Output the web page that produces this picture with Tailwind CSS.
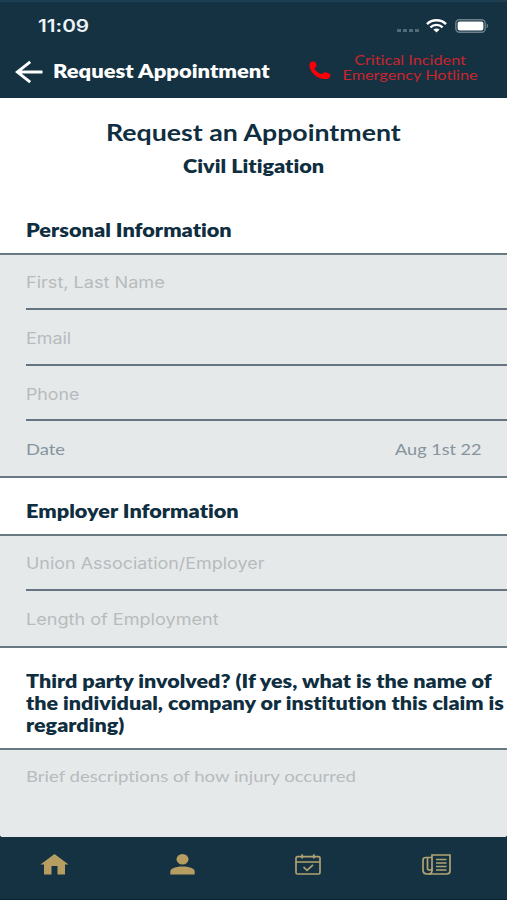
<!DOCTYPE html>
<html lang="en">
<head>
  <meta charset="UTF-8" />
  <meta name="viewport" content="width=device-width, initial-scale=1.0" />
  <title>Request Appointment</title>

  <script src="https://cdn.jsdelivr.net/npm/@tailwindcss/browser@4"></script>
</head>
<body class="bg-[#143242] text-[#0f2e40] font-['Lato',sans-serif] [font-variant-ligatures:none] w-[507px] h-[900px] overflow-hidden flex flex-col whitespace-nowrap">

  <header class="text-white h-[98px] shrink-0 border-t-2 border-[#1d3e50]">
    <!-- status bar -->
    <div class="flex items-center h-12 pl-[38px] pr-[18px]">
      <span class="inline-block origin-left scale-x-[1.22] mt-0.5 font-['Inter',sans-serif] font-semibold text-[17px] text-[#eef3f8]">11:09</span>
      <div class="ml-auto flex items-center -mt-px">
        <div class="flex gap-0.5 mt-2.5 mr-[7px]">
          <span class="w-1 h-[3px] bg-[#506a78]"></span>
          <span class="w-1 h-[3px] bg-[#506a78]"></span>
          <span class="w-1 h-[3px] bg-[#506a78]"></span>
          <span class="w-1 h-[3px] bg-[#506a78]"></span>
        </div>
        <svg class="w-[21px] h-[14px] mr-2" viewBox="0 0 21 14" fill="none" stroke="#fff" stroke-width="2.4">
          <path d="M1 5.1C6.2 0 14.8 0 20 5.1" />
          <path d="M4.4 8.3C7.8 5 13.2 5 16.6 8.3" />
          <path d="M7.4 10.6c1.8-1.6 4.4-1.6 6.2 0L10.5 13.6z" fill="#fff" stroke="none" />
        </svg>
        <svg class="w-[34px] h-[14px]" viewBox="0 0 34 14">
          <rect x=".8" y=".8" width="29.4" height="12.4" rx="3.6" fill="none" stroke="#6d808b" stroke-width="1.4" />
          <rect x="2.6" y="2.4" width="25.8" height="9.2" rx="2" fill="#fff" />
          <path d="M31.6 4.8c2 .6 2 3.8 0 4.4z" fill="#6d808b" />
        </svg>
      </div>
    </div>

    <!-- title bar -->
    <div class="flex items-center h-[46px] pl-[15px] pr-[43px]">
      <svg class="w-7 h-6 -mt-0.5" viewBox="0 0 28 24" fill="none" stroke="#fff" stroke-width="2.9">
        <path d="M15.2 1.8L2.2 12l13 10.2M2 12h25.5" />
      </svg>
      <h1 class="ml-2.5 -mt-[3px] origin-left scale-x-[1.22] font-extrabold text-[18px]">Request Appointment</h1>
      <div class="ml-auto flex items-center -mt-2.5">
        <svg class="w-[22px] h-[19px] mr-[25px] mt-1" viewBox="0 0 22 19" fill="#fb0007">
          <path d="M1.2 1.7C2.5.6 4.6.1 5.6.6c.9.6 1.9 3.2 1.9 4.3 0 1-2.1 1.6-2.2 2.6.9 2.3 4 4.7 7.2 5.6 1.3 0 1.9-1.6 3.1-1.8 1.3-.1 4.9 1 5.7 1.9.7.9-.2 3-1.5 4-1.6 1.2-5.600 1.100-8.600 0C6 15.300 1.900 10.900.800 6.400.400 4.500.300 2.600 1.200 1.700z" />
        </svg>
        <p class="scale-x-[1.25] text-center text-[13px] leading-[15.5px] text-[#c9242d]">Critical Incident<br>Emergency Hotline</p>
      </div>
    </div>
  </header>

  <main class="flex-1 flex flex-col bg-white rounded-b-[3px] overflow-hidden">
    <div class="h-[155px] shrink-0 flex flex-col items-center pt-[19px]">
      <h2 class="scale-x-[1.215] font-bold text-[22px] leading-8">Request an Appointment</h2>
      <p class="scale-x-[1.205] font-extrabold text-[18px] leading-[34px]">Civil Litigation</p>
      <h3 class="self-start ml-[25.5px] mt-[31px] origin-left scale-x-[1.205] font-extrabold text-[18px] leading-8">Personal Information</h3>
    </div>

    <section class="bg-[#e5e9ea] border-y-2 border-[#697984] h-[225px] shrink-0 pl-[26px] grid grid-rows-4 font-['Inter',sans-serif] text-[16px] text-[#b7bbbd]">
      <div class="flex items-center pt-px border-b-2 border-[#657480]"><span class="origin-left scale-x-[1.13]">First, Last Name</span></div>
      <div class="flex items-center pt-0.5 border-b-2 border-[#657480]"><span class="origin-left scale-x-[1.12]">Email</span></div>
      <div class="flex items-center pt-[3px] border-b-2 border-[#657480]"><span class="origin-left scale-x-[1.11]">Phone</span></div>
      <div class="flex items-center justify-between pt-0.5 pr-[25px] font-['Lato',sans-serif] text-[#87949c]">
        <span class="origin-left scale-x-[1.15]">Date</span>
        <span class="origin-right scale-x-[1.13]">Aug 1st 22</span>
      </div>
    </section>

    <h3 class="h-14 shrink-0 flex items-center pl-[25.5px] pt-2.5"><span class="origin-left scale-x-[1.205] font-extrabold text-[18px]">Employer Information</span></h3>

    <section class="bg-[#e5e9ea] border-y-2 border-[#697984] h-[114px] shrink-0 pl-[26px] grid grid-rows-2 font-['Inter',sans-serif] text-[16px] text-[#b7bbbd]">
      <div class="flex items-center border-b-2 border-[#657480]"><span class="origin-left scale-x-[1.12]">Union Association/Employer</span></div>
      <div class="flex items-center"><span class="origin-left scale-x-[1.13]">Length of Employment</span></div>
    </section>

    <h3 class="h-[100px] shrink-0 pl-[25.5px] pt-[22px] font-extrabold text-[18px] leading-[22px]">
      <span class="inline-block origin-left scale-x-[1.195]">Third party involved? (If yes, what is the name of<br>the individual, company or institution this claim is<br>regarding)</span>
    </h3>

    <section class="flex-1 bg-[#e5e9ea] border-t-2 border-[#697984] pl-[26px] pt-3.5 text-[16px] text-[#b7bbbd]">
      <span class="inline-block origin-left scale-x-[1.16]">Brief descriptions of how injury occurred</span>
    </section>
  </main>

  <nav class="h-[63px] shrink-0 flex justify-between items-start pl-10 pr-[56px] pt-[17px] border-b border-[#0b2230]">
    <svg class="w-[29px] h-[21px]" viewBox="0 0 29 21" fill="#b69d62">
      <path d="M14.5 0L28.6 10.5H25V20.5H17.5V12H11.5V20.5H4V10.5H.4z" />
    </svg>
    <svg class="w-[25px] h-[21px]" viewBox="0 0 25 21" fill="#b69d62">
      <ellipse cx="12.5" cy="5.2" rx="6" ry="5.2" />
      <path d="M.3 20.5V17.5C.3 14.5 6.5 12.6 12.5 12.6S24.7 14.5 24.7 17.5V20.5z" />
    </svg>
    <svg class="w-[26px] h-[21px]" viewBox="0 0 26 21" fill="none" stroke="#b1a273" stroke-width="1.7">
      <rect x="1" y="2.6" width="24" height="17.4" rx="1.5" />
      <path d="M1 8h24M7.2.2v4.4M18.8.2v4.4" />
      <path d="M8.5 13l3.5 3.3 6-5.5" />
    </svg>
    <svg class="w-[29px] h-[21px]" viewBox="0 0 29 21" fill="none" stroke="#b1a273" stroke-width="1.7">
      <path d="M10 17V1H28V17C28 19 26.5 20 24.5 20H5C2.5 20 1 18.5 1 16V6C1 4.500 2 3.500 3.500 3.500H10" />
      <path d="M5.500 4V14.500C5.500 16.500 10 16.500 10 14.500M10 16C10 18.500 9 20 6.500 20" />
      <path d="M14 5.500h10.500M14 9h10.500M14 12.500h10.500M14 16h10.500" />
    </svg>
  </nav>

</body>
</html>
